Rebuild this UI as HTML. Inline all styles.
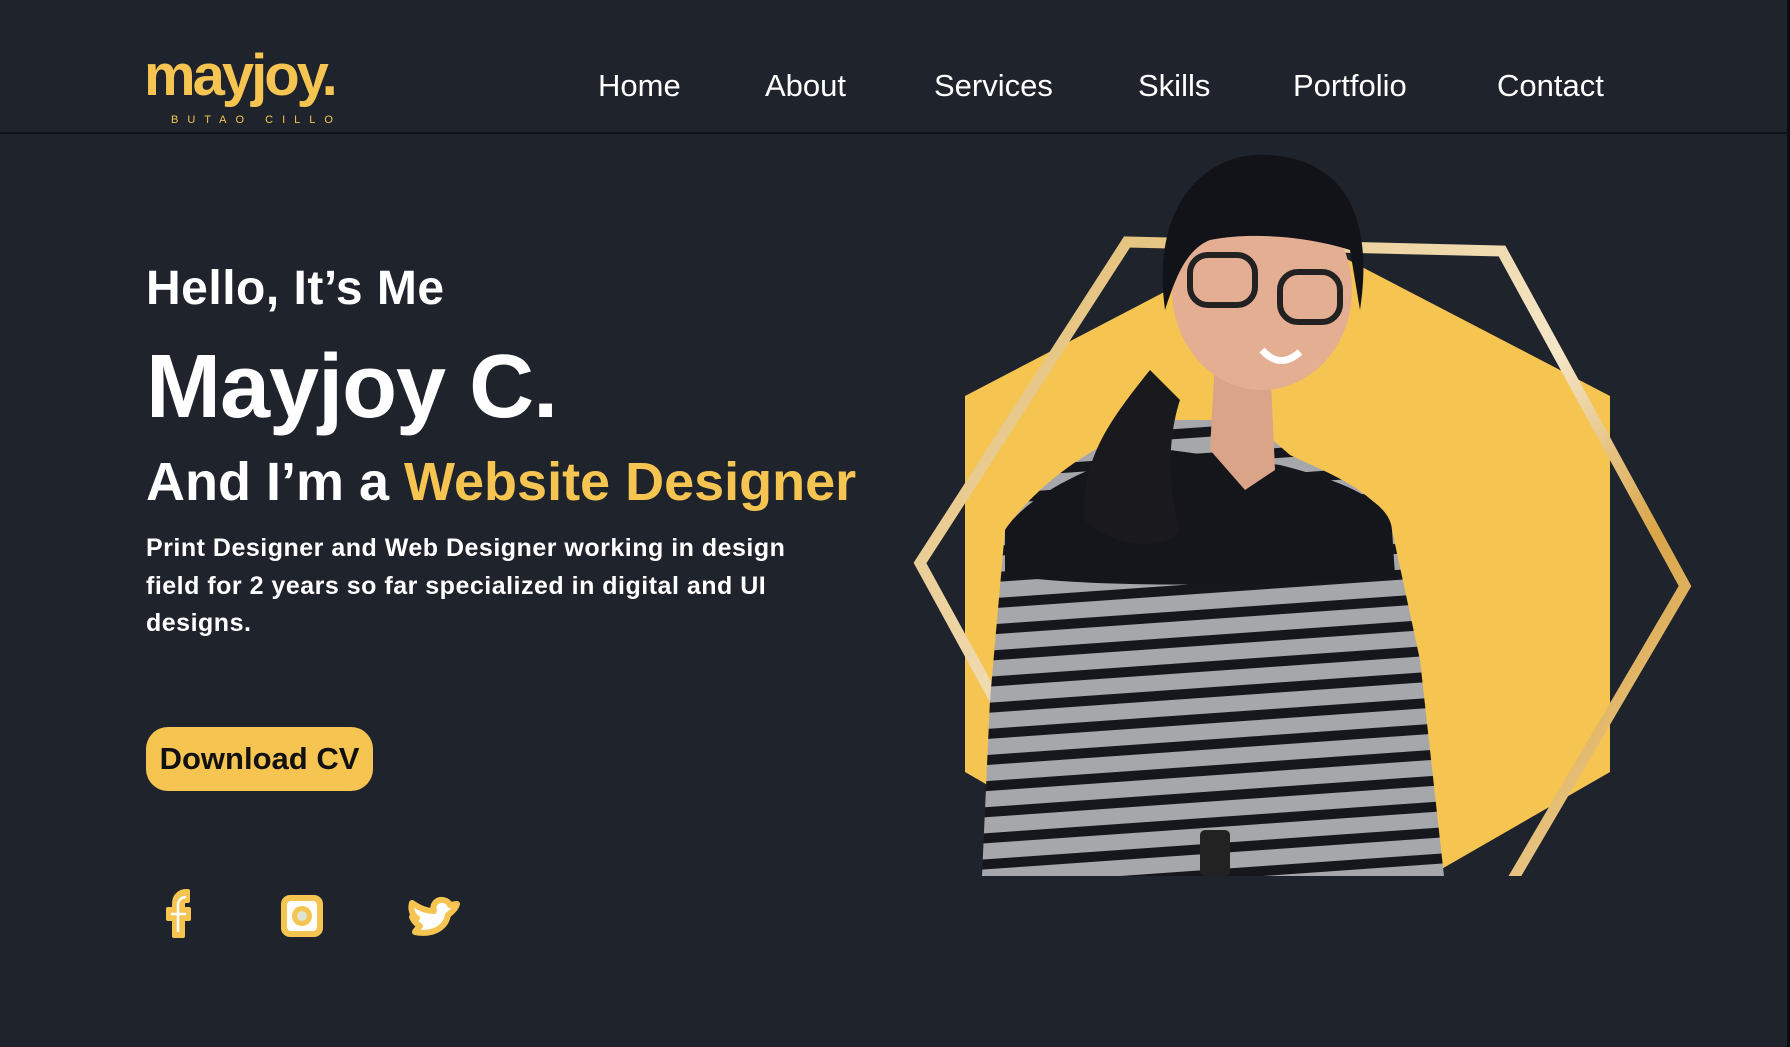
<!DOCTYPE html>
<html><head><meta charset="utf-8"><style>
*{margin:0;padding:0;box-sizing:border-box}
html,body{width:1790px;height:1047px;overflow:hidden;background:#1f232c;font-family:"Liberation Sans",sans-serif;color:#fff}
.nav{position:absolute;left:0;top:0;width:1790px;height:134px;border-bottom:2px solid #101217}
.nav a{position:absolute;top:66px;font-size:31px;color:#fff;text-decoration:none;line-height:40px}
.logo{position:absolute;left:144px;top:46px;color:#f5c451;font-weight:bold;font-size:58px;letter-spacing:-3px;line-height:60px}
.sub{position:absolute;left:171px;top:114px;color:#f5c451;font-size:11px;letter-spacing:9px}
.t{position:absolute;left:146px;white-space:nowrap}
.btn{position:absolute;left:146px;top:727px;width:227px;height:64px;border-radius:22px;background:#f5c451;color:#111;font-weight:bold;font-size:31px;line-height:64px;text-align:center}
.r{position:absolute;right:0;top:0;width:3px;height:1047px;background:#0c0d10}
</style></head><body>
<div class="nav">
<div class="logo">mayjoy.</div><div class="sub">BUTAO CILLO</div>
<a style="left:598px">Home</a><a style="left:765px">About</a><a style="left:934px">Services</a><a style="left:1138px">Skills</a><a style="left:1293px">Portfolio</a><a style="left:1497px">Contact</a>
</div>
<div class="t" style="top:261px;font-size:48px;font-weight:bold;letter-spacing:0.5px">Hello, It’s Me</div>
<div class="t" style="top:336px;font-size:90px;font-weight:bold;letter-spacing:-1px">Mayjoy C.</div>
<div class="t" style="top:451px;font-size:54px;font-weight:bold">And I’m a <span style="color:#f5c451">Website Designer</span></div>
<div class="t" style="top:530px;font-size:25px;line-height:37.7px;font-weight:bold;white-space:normal;width:700px;letter-spacing:0.5px">Print Designer and Web Designer working in design<br>field for 2 years so far specialized in digital and UI<br>designs.</div>
<div class="btn">Download CV</div>
<svg style="position:absolute;left:0;top:0" width="1790" height="1047">
<defs><linearGradient id="g" x1="0" y1="0" x2="1" y2="1"><stop offset="0" stop-color="#e0b766"/><stop offset=".5" stop-color="#f5e6c8"/><stop offset=".7" stop-color="#d9a548"/><stop offset="1" stop-color="#f3dcae"/></linearGradient>
<clipPath id="c"><rect x="0" y="135" width="1790" height="741"/></clipPath>
<pattern id="s" width="40" height="26" patternUnits="userSpaceOnUse" patternTransform="rotate(-4)"><rect width="40" height="26" fill="#a6a7ab"/><rect y="16" width="40" height="10" fill="#15171d"/></pattern></defs>
<g clip-path="url(#c)">
<polygon points="1287,228 1610,396 1610,772 1287,958 965,772 965,396" fill="#f5c451"/>
<polygon points="1127,242 1502,251 1685,586 1495,910 1110,910 920,563" fill="none" stroke="url(#g)" stroke-width="11"/>
<path d="M1160,420 C1100,440 1040,480 1005,530 L990,700 982,876 1444,876 1420,660 1392,530 C1380,490 1320,470 1290,455 L1250,420 Z" fill="url(#s)"/>
<path d="M1005,530 C1030,490 1120,450 1170,450 L1280,465 C1340,480 1390,500 1392,530 L1395,575 C1300,585 1100,590 1005,575 Z" fill="#14161c"/>
<path d="M1150,370 C1110,420 1080,460 1085,520 C1110,545 1160,555 1180,530 C1165,480 1170,430 1180,400 Z" fill="#1a1a1e"/>
<path d="M1215,360 L1270,360 1275,470 1245,490 1210,450 Z" fill="#d9a488"/>
<ellipse cx="1262" cy="290" rx="90" ry="100" fill="#e4ae92"/>
<path d="M1165,310 C1150,200 1210,150 1270,155 C1340,160 1375,210 1360,310 L1350,250 C1320,240 1260,230 1210,240 C1185,250 1175,280 1165,310 Z" fill="#121318"/>
<rect x="1190" y="255" width="65" height="50" rx="18" fill="none" stroke="#222" stroke-width="6"/>
<rect x="1280" y="272" width="60" height="50" rx="18" fill="none" stroke="#222" stroke-width="6"/>
<path d="M1262,350 Q1280,370 1300,352" stroke="#fff" stroke-width="7" fill="none"/>
<rect x="1200" y="830" width="30" height="46" rx="5" fill="#222"/>
</g>
<path d="M174,936 v-17 h-6 v-10 h6 v-6 a12,12 0 0 1 12,-12 h2 v10 h-2 a3,3 0 0 0 -3,3 v5 h6 v10 h-6 v17 z" fill="#f5c451" stroke="#f5c451" stroke-width="4" stroke-linejoin="round"/>
<path d="M178,932 v-26 a8,8 0 0 1 8,-9 M171,914 h15" stroke="#fff" stroke-width="2.5" fill="none"/>
<rect x="281" y="895" width="42" height="42" rx="9" fill="#f5c451"/><rect x="287" y="901" width="30" height="30" rx="4" fill="#fff"/><circle cx="302" cy="916" r="10" fill="#f5c451"/><circle cx="302" cy="916" r="5" fill="#dde6d6"/>
<path d="M415,932 C430,935 445,930 448,915 C452,912 456,908 457,904 L450,905 C448,900 440,898 436,902 C433,905 433,908 434,911 C425,911 418,907 412,903 C410,910 413,916 417,918 C414,918 413,918 412,917 C414,922 418,925 420,926 C418,928 416,930 415,932Z" fill="#fff" stroke="#f5c451" stroke-width="6" stroke-linejoin="round"/>
</svg>
<div class="r"></div>
</body></html>
